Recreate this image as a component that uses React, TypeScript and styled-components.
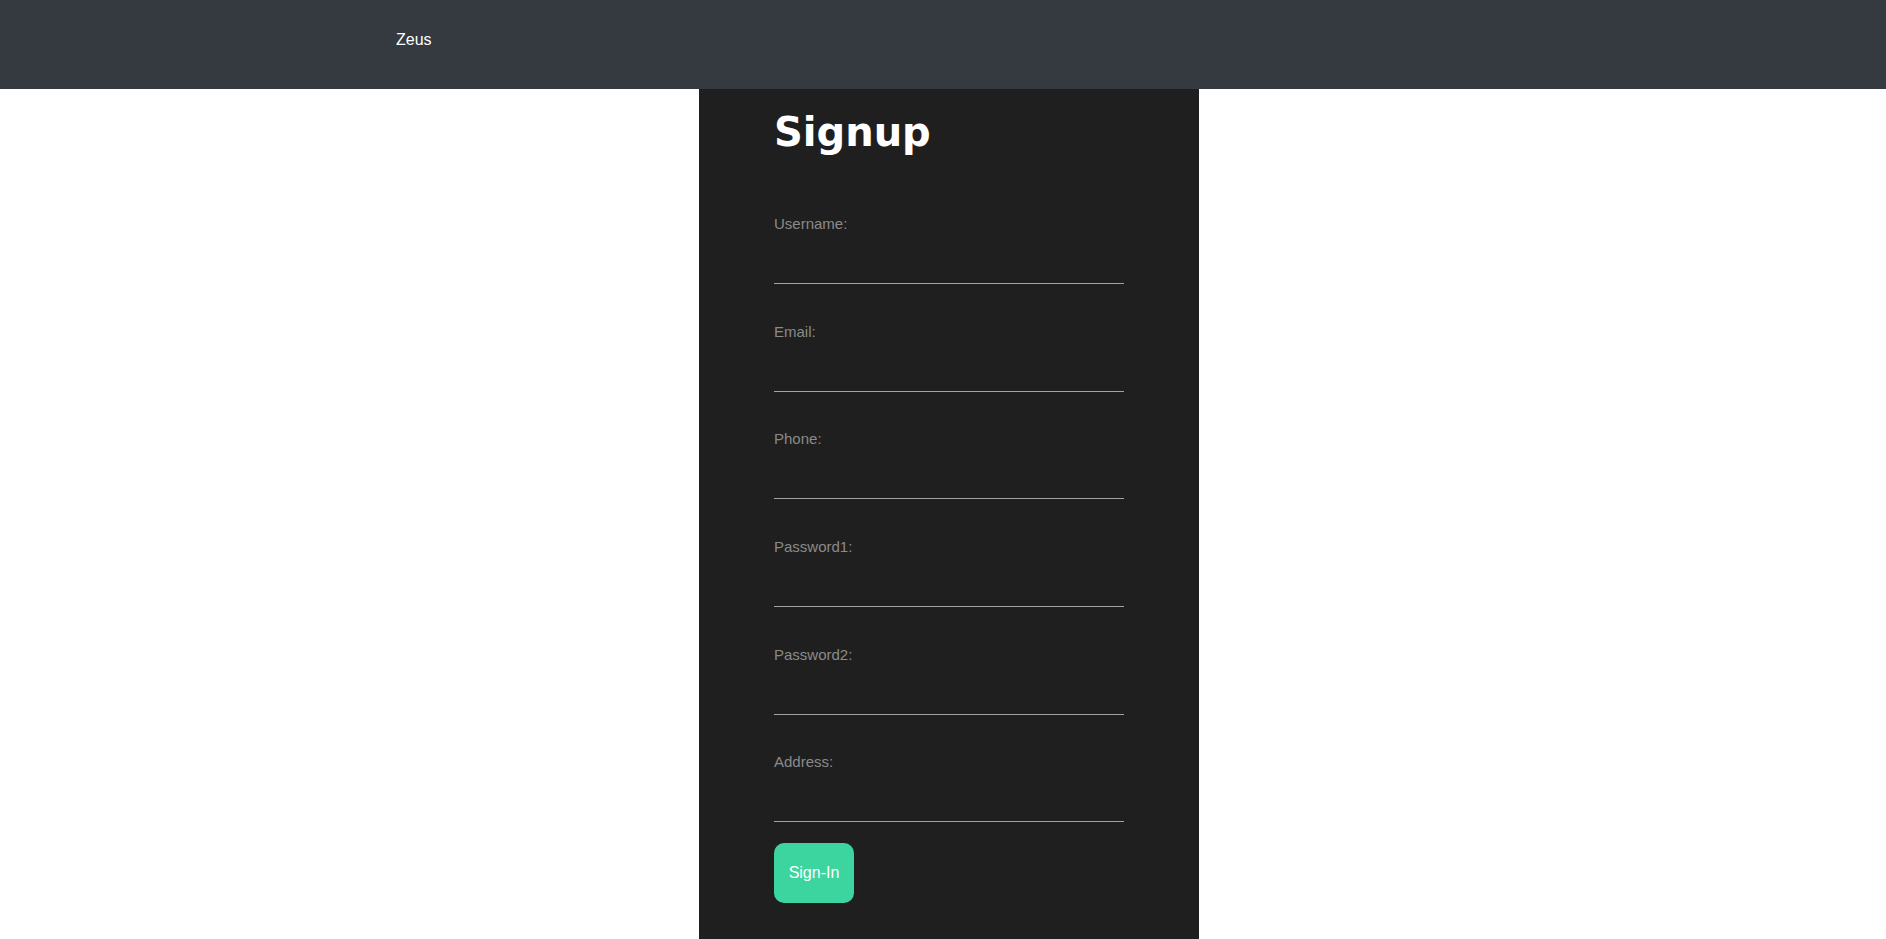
import React from 'react';
import styled, { createGlobalStyle } from 'styled-components';

const GlobalStyle = createGlobalStyle`
	html, body {
		margin: 0;
		padding: 0;
		background: #ffffff;
		font-family: "Liberation Sans", Arial, sans-serif;
		overflow: hidden;
	}
`;

const fields = ['Username', 'Email', 'Phone', 'Password1', 'Password2', 'Address'];

export default function App() : React.ReactElement {
	return (
		<>
			<GlobalStyle />
			<NavBar>
				<Brand>Zeus</Brand>
			</NavBar>

			<Page>
				<Card>
					<Title>Signup</Title>

					<Form onSubmit={(e) => e.preventDefault()}>
						{fields.map((name, i) => (
							<Field key={name}>
								<Label htmlFor={name.toLowerCase()}>{name}:</Label>
								<Input
									id={name.toLowerCase()}
									type={name.startsWith('Password') ? 'password' : 'text'}
									autoFocus={i === 0}
								/>
							</Field>
						))}

						<SubmitButton type="submit">Sign-In</SubmitButton>
					</Form>
				</Card>
			</Page>
		</>
	)
}

const NavBar = styled.nav`
	box-sizing: border-box;
	height: 89px;
	padding: 31px 0 0 396px;
	background: #343a40;
`;

const Brand = styled.div`
	color: #ffffff;
	font-size: 16px;
	line-height: normal;
`;

const Page = styled.main`
	display: flex;
	justify-content: center;
	padding-left: 12px;
`;

const Card = styled.div`
	box-sizing: border-box;
	width: 500px;
	padding: 20px 75px 48px;
	background: #1f1f1f;
	border-radius: 0 0 10px 10px;
`;

const Title = styled.h1`
	margin: 0 0 60px;
	color: #ffffff;
	font-family: "DejaVu Sans", sans-serif;
	font-weight: bold;
	font-size: 40px;
	line-height: normal;
`;

const Form = styled.form`
	display: flex;
	flex-direction: column;
	gap: 38.7px;
`;

const Field = styled.div`
	display: flex;
	flex-direction: column;
	gap: 12px;
`;

const Label = styled.label`
	color: #8a8a8a;
	font-size: 15px;
	line-height: 17px;
`;

const Input = styled.input`
	box-sizing: border-box;
	width: 100%;
	height: 40px;
	padding: 0;
	background: transparent;
	border: none;
	border-bottom: 1px solid #a3a3a3;
	color: #ffffff;
	caret-color: #f5deb3;
	font-family: "Liberation Sans", Arial, sans-serif;
	font-size: 16px;
	outline: none;
`;

const SubmitButton = styled.button`
	align-self: flex-start;
	width: 80px;
	height: 60px;
	margin-top: -18px;
	padding: 0;
	border: none;
	border-radius: 10px;
	background: #3cd5a0;
	color: #ffffff;
	font-family: "Liberation Sans", Arial, sans-serif;
	font-size: 16px;
	cursor: pointer;
`;
